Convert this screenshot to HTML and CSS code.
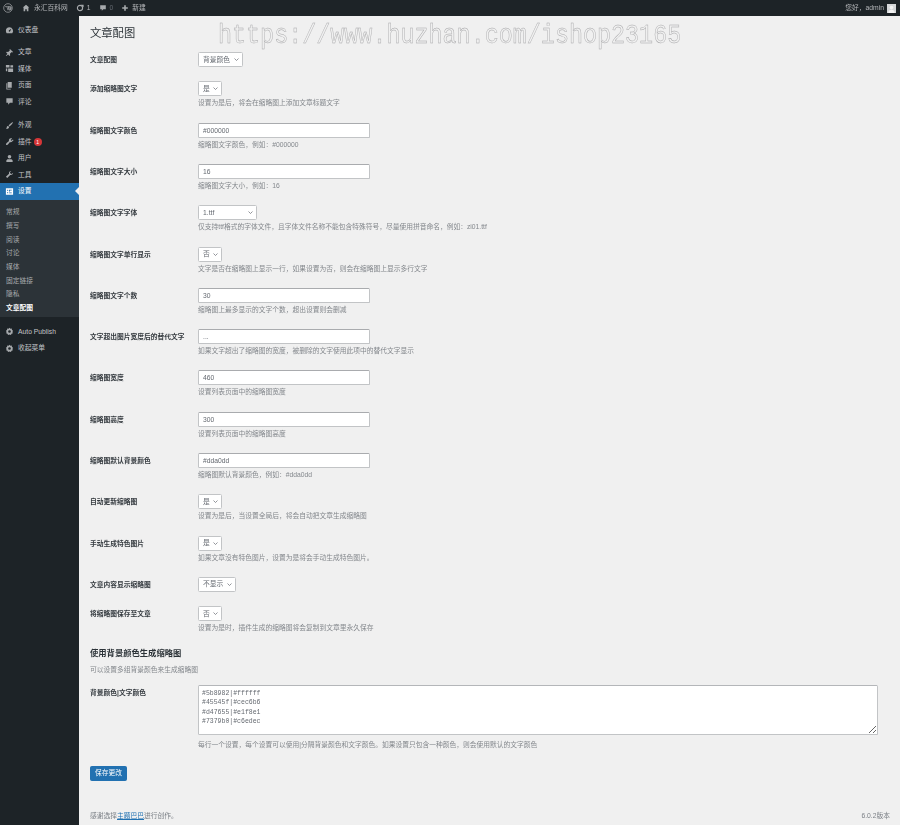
FILE: index.html
```html
<!DOCTYPE html>
<html lang="zh-CN">
<head>
<meta charset="utf-8">
<title>文章配图</title>
<link rel="stylesheet" href="styles.css">
</head>
<body>
<header class="adminbar">
  <div class="ab-left">
    <svg class="ab-logo" viewBox="0 0 20 20"><circle cx="10" cy="10" r="8.6" fill="none" stroke="#a7aaad" stroke-width="1.4"/><path d="M4.2 7.2h4.6l-.9.5 2.1 6.6 1.6-4.6-.9-2.5h3.9l-1 .5 2.1 6.4 1-3.4c.4-1.6-.2-2.8-.9-3.5L13.5 14.8 10 6" fill="none" stroke="#a7aaad" stroke-width="1.3"/></svg>
    <span class="ab-item ab-site"><svg class="ab-ico" viewBox="0 0 20 20"><path d="M10 2 2 9h2v9h4v-5h4v5h4V9h2z" fill="#a7aaad"/></svg>永汇百科网</span>
    <span class="ab-item"><svg class="ab-ico" viewBox="0 0 20 20"><circle cx="10" cy="10" r="6.500" fill="none" stroke="#a7aaad" stroke-width="2.800"/><path d="M12 2h7v6z" fill="#a7aaad"/></svg>1</span>
    <span class="ab-item ab-muted"><svg class="ab-ico" viewBox="0 0 20 20"><path d="M3 3h14v10h-6l-4 4v-4H3z" fill="#a7aaad"/></svg>0</span>
    <span class="ab-item"><svg class="ab-ico" viewBox="0 0 20 20"><path d="M8 3h4v5h5v4h-5v5H8v-5H3V8h5z" fill="#a7aaad"/></svg>新建</span>
  </div>
  <div class="ab-right">您好，admin<span class="avatar"><svg viewBox="0 0 20 20"><rect width="20" height="20" fill="#d5d7d9"/><circle cx="10" cy="8" r="4" fill="#f4f4f4"/><path d="M3 20c0-5 3-7 7-7s7 2 7 7z" fill="#f4f4f4"/></svg></span></div>
</header>

<div class="shell">
  <nav class="sidebar">
    <ul class="menu group-a">
      <li><svg viewBox="0 0 20 20"><path d="M10 3a8 8 0 0 0-8 8c0 2 .7 3.600 1.800 5h12.400A8 8 0 0 0 10 3zm0 9.500a1.800 1.800 0 0 1-1-3.300L14 6l-2.500 5.500a1.800 1.800 0 0 1-1.500 1z"/></svg>仪表盘</li>
    </ul>
    <ul class="menu group-b">
      <li><svg viewBox="0 0 20 20"><path d="m11 2 7 7-2 1-1-1-4 4 .5 3-1.500 1.500-3-3L3 18l-1 0 0-1 3.500-4-3-3L4 8.500l3 .5 4-4-1-1z"/></svg>文章</li>
      <li><svg viewBox="0 0 20 20"><path d="M2 2h8v6H2zM7 10h11v8H7zM12 3h6v5h-6zM2 10h3v6H2z"/></svg>媒体</li>
      <li><svg viewBox="0 0 20 20"><path d="M6 2h9v13H6zM3 5h2v12h8v2H3z"/></svg>页面</li>
      <li><svg viewBox="0 0 20 20"><path d="M3 3h14v10h-6l-4 4v-4H3z"/></svg>评论</li>
    </ul>
    <ul class="menu group-c">
      <li><svg viewBox="0 0 20 20"><path d="M18 2c-3 1-8 5-10 8l2 2c3-2 7-7 8-10zM7 11c-2 0-3 1.500-3 3 0 1-.7 2-2 2.500C4 18 9 18 9 13.500z"/></svg>外观</li>
      <li><svg viewBox="0 0 20 20"><path d="m14 2 1.500 1.500-3 3 2 2 3-3L19 7l-3 3c-1 1-3 2-5 1l-5 6-3 1-1-1 1-3 6-5c-1-2 0-4 1-5z"/></svg>插件<span class="badge">1</span></li>
      <li><svg viewBox="0 0 20 20"><circle cx="10" cy="6" r="4"/><path d="M3 18v-3c0-2 2-3.500 4-3.500h6c2 0 4 1.500 4 3.500v3z"/></svg>用户</li>
      <li><svg viewBox="0 0 20 20"><path d="M18 6a5 5 0 0 1-6.500 5L5 18l-3-3 7-6.500A5 5 0 0 1 14 2l-3 3 1 3 3 1z"/></svg>工具</li>
      <li class="active"><svg viewBox="0 0 20 20"><path d="M2 3h16v14H2zM5 11v3h2v-3zm0-5v3h2V6zm4 6v2h6v-2zm0-6v4h2V8h4V6z" fill-rule="evenodd"/></svg>设置</li>
    </ul>
    <ul class="submenu">
      <li>常规</li><li>撰写</li><li>阅读</li><li>讨论</li><li>媒体</li><li>固定链接</li><li>隐私</li><li class="current">文章配图</li>
    </ul>
    <ul class="menu group-d">
      <li><svg viewBox="0 0 20 20"><path d="M10 1.500 12 4l3-.5.500 3 2.500 2L16.500 11l1 3-3 .8-1.300 2.800-3.200-1-3.200 1-1.300-2.800-3-.8 1-3L2 8.500l2.500-2 .5-3L8 4zM10 7a3 3 0 1 0 0 6 3 3 0 0 0 0-6z" fill-rule="evenodd"/></svg>Auto Publish</li>
      <li><svg viewBox="0 0 20 20"><path d="M10 1.500 12 4l3-.5.500 3 2.500 2L16.500 11l1 3-3 .8-1.300 2.800-3.200-1-3.200 1-1.300-2.800-3-.8 1-3L2 8.500l2.500-2 .5-3L8 4zM10 7a3 3 0 1 0 0 6 3 3 0 0 0 0-6z" fill-rule="evenodd"/></svg>收起菜单</li>
    </ul>
  </nav>

  <main class="main">
    <div class="watermark" aria-hidden="true">https://www.huzhan.com/ishop23165</div>
    <h1 class="title">文章配图</h1>

    <div class="row">
      <div class="label">文章配图</div>
      <div class="field"><span class="select w45">背景颜色<svg viewBox="0 0 10 6"><path d="m1 1 4 4 4-4"/></svg></span></div>
    </div>
    <div class="row">
      <div class="label">添加缩略图文字</div>
      <div class="field"><span class="select w24">是<svg viewBox="0 0 10 6"><path d="m1 1 4 4 4-4"/></svg></span><p class="hint">设置为是后，将会在缩略图上添加文章标题文字</p></div>
    </div>
    <div class="row">
      <div class="label">缩略图文字颜色</div>
      <div class="field"><input class="input" value="#000000"><p class="hint">缩略图文字颜色，例如：#000000</p></div>
    </div>
    <div class="row">
      <div class="label">缩略图文字大小</div>
      <div class="field"><input class="input" value="16"><p class="hint">缩略图文字大小，例如：16</p></div>
    </div>
    <div class="row">
      <div class="label">缩略图文字字体</div>
      <div class="field"><span class="select w59">1.ttf<svg viewBox="0 0 10 6"><path d="m1 1 4 4 4-4"/></svg></span><p class="hint">仅支持ttf格式的字体文件，且字体文件名称不能包含特殊符号，尽量使用拼音命名，例如：zi01.ttf</p></div>
    </div>
    <div class="row">
      <div class="label">缩略图文字单行显示</div>
      <div class="field"><span class="select w24">否<svg viewBox="0 0 10 6"><path d="m1 1 4 4 4-4"/></svg></span><p class="hint">文字是否在缩略图上显示一行，如果设置为否，则会在缩略图上显示多行文字</p></div>
    </div>
    <div class="row">
      <div class="label">缩略图文字个数</div>
      <div class="field"><input class="input" value="30"><p class="hint">缩略图上最多显示的文字个数，超出设置则会删减</p></div>
    </div>
    <div class="row">
      <div class="label">文字超出图片宽度后的替代文字</div>
      <div class="field"><input class="input" value="..."><p class="hint">如果文字超出了缩略图的宽度，被删除的文字使用此项中的替代文字显示</p></div>
    </div>
    <div class="row">
      <div class="label">缩略图宽度</div>
      <div class="field"><input class="input" value="460"><p class="hint">设置列表页面中的缩略图宽度</p></div>
    </div>
    <div class="row">
      <div class="label">缩略图高度</div>
      <div class="field"><input class="input" value="300"><p class="hint">设置列表页面中的缩略图高度</p></div>
    </div>
    <div class="row">
      <div class="label">缩略图默认背景颜色</div>
      <div class="field"><input class="input" value="#dda0dd"><p class="hint">缩略图默认背景颜色，例如：#dda0dd</p></div>
    </div>
    <div class="row">
      <div class="label">自动更新缩略图</div>
      <div class="field"><span class="select w24">是<svg viewBox="0 0 10 6"><path d="m1 1 4 4 4-4"/></svg></span><p class="hint">设置为是后，当设置全局后，将会自动把文章生成缩略图</p></div>
    </div>
    <div class="row">
      <div class="label">手动生成特色图片</div>
      <div class="field"><span class="select w24">是<svg viewBox="0 0 10 6"><path d="m1 1 4 4 4-4"/></svg></span><p class="hint">如果文章没有特色图片，设置为是将会手动生成特色图片。</p></div>
    </div>
    <div class="row">
      <div class="label">文章内容显示缩略图</div>
      <div class="field"><span class="select w38">不显示<svg viewBox="0 0 10 6"><path d="m1 1 4 4 4-4"/></svg></span></div>
    </div>
    <div class="row">
      <div class="label">将缩略图保存至文章</div>
      <div class="field"><span class="select w24">否<svg viewBox="0 0 10 6"><path d="m1 1 4 4 4-4"/></svg></span><p class="hint">设置为是时，插件生成的缩略图将会复制到文章里永久保存</p></div>
    </div>

    <h2 class="section">使用背景颜色生成缩略图</h2>
    <p class="hint section-note">可以设置多组背景颜色来生成缩略图</p>
    <div class="row">
      <div class="label">背景颜色|文字颜色</div>
      <div class="field">
        <textarea class="area" spellcheck="false">#5b8982|#ffffff
#45545f|#cec6b6
#d47655|#e1f8e1
#7379b0|#c6edec</textarea>
        <p class="hint hint-area">每行一个设置，每个设置可以使用|分隔背景颜色和文字颜色。如果设置只包含一种颜色，则会使用默认的文字颜色</p>
      </div>
    </div>
    <div class="actions"><button class="save" type="button">保存更改</button></div>

    <footer class="foot"><span>感谢选择<a href="#">主题巴巴</a>进行创作。</span><span>6.0.2版本</span></footer>
  </main>
</div>
</body>
</html>
```

FILE: styles.css
```css
* { box-sizing: border-box; }
html, body { margin: 0; height: 100%; }
body {
  background: #f0f0f0;
  color: #3c434a;
  font-family: "Liberation Sans", "Noto Sans CJK SC", sans-serif;
  font-size: 6.750px;
  line-height: 10px;
  overflow: hidden;
}
ul { list-style: none; margin: 0; padding: 0; }
p, h1, h2 { margin: 0; }

.adminbar {
  height: 16px;
  background: #1d2327;
  color: #b4b6b9;
  display: flex;
  justify-content: space-between;
  align-items: center;
  padding: 0 4px 0 3px;
  filter: blur(0.4px);
}
.ab-left { display: flex; align-items: center; }
.ab-logo { width: 10px; height: 10px; margin-right: 9px; }
.ab-item { display: flex; align-items: center; gap: 3px; margin-right: 8px; }
.ab-site { margin-right: 8px; gap: 4px; }
.ab-muted { color: #646970; }
.ab-ico { width: 8px; height: 8px; }
.ab-right { display: flex; align-items: center; gap: 3px; }
.avatar { width: 9px; height: 9px; display: block; }
.avatar svg { display: block; width: 9px; height: 9px; }

.shell { display: flex; height: 809px; filter: blur(0.4px); }
.sidebar { width: 79px; flex: none; background: #1d2327; color: #c3c4c7; }
.menu li {
  height: 16.5px;
  display: flex;
  align-items: center;
  padding-left: 5px;
}
.menu svg { width: 9px; height: 9px; margin-right: 4px; fill: #a7aaad; flex: none; }
.group-a { padding-top: 6px; }
.group-b { padding-top: 5.500px; }
.group-c { padding-top: 7px; }
.group-d { padding-top: 7px; }
.badge {
  width: 8px; height: 8px;
  margin-left: 2px;
  border-radius: 50%;
  background: #d63638;
  color: #fff;
  font-size: 5px;
  line-height: 8px;
  text-align: center;
}
.menu li.active { background: #2271b1; color: #fff; position: relative; }
.menu li.active svg { fill: #fff; }
.menu li.active::after {
  content: "";
  position: absolute;
  right: 0; top: 4px;
  border: 4px solid transparent;
  border-right-color: #f0f0f1;
  border-left-width: 0;
}
.submenu { background: #2c3338; padding: 6px 0 0 6px; height: 117px; color: #a7aaad; }
.submenu li { height: 13.700px; display: flex; align-items: center; }
.submenu .current { color: #fff; font-weight: 700; }

.main {
  flex: 1;
  min-width: 0;
  position: relative;
  padding: 0 10px 0 11px;
  display: flex;
  flex-direction: column;
}
.watermark {
  position: absolute;
  left: 139px;
  top: 6px;
  font-family: "Liberation Mono", monospace;
  font-size: 23.400px;
  line-height: 28px;
  color: transparent;
  -webkit-text-stroke: 0.4px #a6a6a8;
  white-space: nowrap;
  transform: scaleY(1.2);
  pointer-events: none;
}
.title {
  font-size: 11.300px;
  font-weight: 400;
  line-height: 15px;
  color: #2c3338;
  padding: 10px 0 4px;
  height: 29px;
}
.row { display: grid; grid-template-columns: 108px 1fr; padding: 7.150px 0; }
.label { font-weight: 700; color: #33393e; padding-top: 3px; }
.field { min-width: 0; }
.select {
  height: 15px;
  display: inline-flex;
  align-items: center;
  justify-content: space-between;
  vertical-align: top;
  background: #fff;
  border: 1px solid #c2c4c6;
  border-radius: 1.500px;
  padding: 0 3px 0 4px;
  color: #646970;
}
.select svg { width: 5px; height: 3px; fill: none; stroke: #646970; stroke-width: 1.400; flex: none; }
.w24 { width: 24px; }
.w38 { width: 38px; }
.w45 { width: 45px; }
.w59 { width: 59px; }
.input {
  display: block;
  width: 172px;
  height: 15px;
  background: #fff;
  border: 1px solid #c2c4c6;
  border-top-color: #a9abae;
  border-radius: 1.500px;
  padding: 0 4px;
  color: #646970;
  font: inherit;
  outline: 0;
}
.hint { color: #83878c; margin-top: 2px; }
.section {
  font-size: 8.300px;
  font-weight: 700;
  line-height: 12px;
  color: #2c3338;
  margin-top: 7px;
}
.section-note { margin-top: 6px; }
.section-note + .row { padding-top: 9.400px; }
.area {
  display: block;
  width: 680px;
  height: 50px;
  background: #fff;
  border: 1px solid #c2c4c6;
  border-top-color: #b4b6b9;
  border-radius: 1.500px;
  padding: 3px 3px;
  font-family: "Liberation Mono", monospace;
  font-size: 6.500px;
  line-height: 9.500px;
  color: #646970;
  outline: 0;
}
.hint-area { margin-top: 5px; }
.actions { padding-top: 9px; }
.save {
  display: block;
  width: 37px;
  height: 15px;
  padding: 0;
  border: 1px solid #2271b1;
  border-radius: 1.500px;
  background: #2271b1;
  color: #fff;
  font: inherit;
}
.foot {
  margin-top: auto;
  padding-bottom: 4px;
  display: flex;
  justify-content: space-between;
  color: #7a7f85;
}
.foot a { color: #2271b1; }
```
